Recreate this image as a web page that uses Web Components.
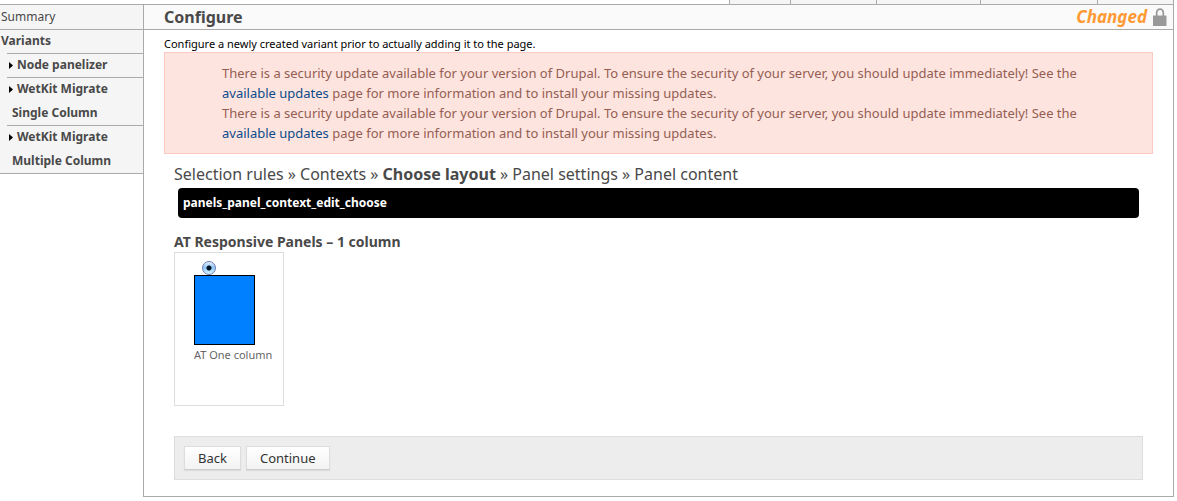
<!DOCTYPE html>
<html lang="en">
<head>
<meta charset="utf-8">
<title>Configure</title>
<style>
  body { margin: 0; background: #fff; color: #494949; font-family: "Noto Sans", "Open Sans", sans-serif; font-size: 12px; }
</style>
</head>
<body>
<page-manager>
  <task-tabs slot="tabs"></task-tabs>
  <task-nav slot="nav">
    <nav-item href="#summary">Summary</nav-item>
    <nav-item href="#variants" section>Variants</nav-item>
    <nav-item href="#node" nested>Node panelizer</nav-item>
    <nav-item href="#single" nested>WetKit Migrate<br>Single Column</nav-item>
    <nav-item href="#multiple" nested>WetKit Migrate<br>Multiple Column</nav-item>
  </task-nav>
  <panel-header slot="header" status="Changed">Configure</panel-header>
  <update-alert></update-alert>
  <wizard-trail></wizard-trail>
  <debug-bar>panels_panel_context_edit_choose</debug-bar>
  <layout-picker heading="AT Responsive Panels – 1 column">AT One column</layout-picker>
  <form-actions></form-actions>
</page-manager>
<script>
const define = (name, render) => customElements.define(name, class extends HTMLElement {
  constructor() { super(); this.attachShadow({ mode: "open" }); }
  connectedCallback() { this.shadowRoot.innerHTML = render(this); }
});

define("page-manager", () => `
<style>
  :host { display: block; padding-right: 3px; }
  .body { display: grid; grid-template-columns: 144px minmax(0, 1fr); }
  main { border: 1px solid #aaa; border-width: 0 1px 1px 0; padding-bottom: 16px; }
  .content { padding: 6px 20px 0; }
  aside { display: flex; flex-direction: column; }
  aside::after { content: ""; flex: 1; border-right: 1px solid #aaa; }
  p { margin: 0; color: #000; font-size: 11px; line-height: 16px; }
</style>
<slot name="tabs"></slot>
<div class="body">
  <aside><slot name="nav"></slot></aside>
  <main>
    <slot name="header"></slot>
    <div class="content">
      <p>Configure a newly created variant prior to actually adding it to the page.</p>
      <slot></slot>
    </div>
  </main>
</div>`);

define("task-tabs", () => `
<style>
  :host { display: flex; justify-content: flex-end; height: 4px; border-bottom: 1px solid #aaa; }
  i { box-sizing: border-box; background: #f5f5f5; border-left: 1px solid #aaa; }
  i:last-child { border-right: 1px solid #aaa; }
</style>
<i style="width:61px"></i><i style="width:86px"></i><i style="width:104px"></i><i style="width:117px"></i><i style="width:77px"></i>`);

define("task-nav", () => `
<style>
  :host { display: block; background: #f5f5f5; border: 1px solid #aaa; border-width: 0 1px 1px 0; }
</style>
<nav><slot></slot></nav>`);

define("nav-item", el => `
<style>
  :host { display: block; }
  a { display: block; padding-left: 1px; color: inherit; text-decoration: none; line-height: 24px; }
  :host([section]) a, :host([nested]) a { box-shadow: inset 0 1px #aaa; font-weight: bold; }
  :host([nested]) a { margin-left: 7px; padding-left: 5px; text-indent: -3px; }
  svg { width: 5px; height: 7px; margin-right: 3px; }
</style>
<a href="${el.getAttribute("href")}">${el.hasAttribute("nested") ? '<svg viewBox="0 0 5 7"><path d="M0 0L4 3.5L0 7Z" fill="#000"/></svg>' : ""}<slot></slot></a>`);

define("panel-header", el => `
<style>
  :host { display: flex; align-items: center; height: 24px; padding: 0 6px 0 20px; gap: 6px; background: #fafafa; border-bottom: 1px solid #aaa; }
  h1 { margin: 0; flex: 1; font-size: 16px; line-height: 24px; }
  em { color: #f93; font-size: 17px; font-weight: bold; line-height: 24px; }
  svg { width: 14px; height: 18px; }
</style>
<h1><slot></slot></h1><em>${el.getAttribute("status")}</em>
<svg viewBox="0 0 14 18" role="img" aria-label="Locked"><path d="M3.7 8V4.5a3.3 3.3 0 0 1 6.6 0V8" fill="none" stroke="#999" stroke-width="1.7"/><rect x="0" y="7.5" width="13.5" height="10.5" fill="#999"/></svg>`);

define("update-alert", () => {
  const item = `<li>There is a security update available for your version of Drupal. To ensure the security of your server, you should update immediately! See the <a href="#updates">available updates</a> page for more information and to install your missing updates.</li>`;
  return `
<style>
  :host { display: block; background: #fee4df; border: 1px solid #fcc9c4; padding: 10px 30px 10px 57px; color: #945e52; font-size: 13px; line-height: 20px; }
  ul { margin: 0; padding: 0; list-style: none; }
  a { color: #0b4b8a; text-decoration: none; }
</style>
<ul>${item}${item}</ul>`;
});

define("wizard-trail", () => `
<style>
  :host { display: block; padding: 8px 10px 2px; font-size: 16px; line-height: 24px; }
</style>
<nav>Selection rules » Contexts » <strong>Choose layout</strong> » Panel settings » Panel content</nav>`);

define("debug-bar", () => `
<style>
  :host { display: block; margin: 0 14px; padding: 0 5px; background: #000; color: #fff; border-radius: 4px; font-size: 12px; font-weight: bold; line-height: 30px; }
</style>
<slot></slot>`);

define("layout-picker", el => `
<style>
  :host { display: block; padding: 14px 10px 0; }
  h2 { margin: 0; font-size: 14px; line-height: 20px; }
  .card { box-sizing: border-box; width: 110px; height: 154px; border: 1px solid #ddd; padding: 8px 0 0 19px; display: flex; flex-direction: column; }
  input { appearance: none; box-sizing: border-box; width: 14px; height: 14px; margin: 0 0 0 8px; border: 1px solid #6b79b4; border-radius: 50%; background: radial-gradient(circle, #012 0 2px, transparent 3px), linear-gradient(#e9f2fb, #8cc4f3 45%, #d8f8ff); }
  label { display: block; color: #666; font-size: 11px; line-height: 20px; white-space: nowrap; }
  .preview { display: block; box-sizing: border-box; width: 61px; height: 70px; background: #0080ff; border: 1px solid #000; }
</style>
<h2>${el.getAttribute("heading")}</h2>
<div class="card">
  <input type="radio" name="layout" id="one" checked>
  <label for="one"><span class="preview"></span><slot></slot></label>
</div>`);

define("form-actions", () => `
<style>
  :host { display: flex; gap: 5px; margin: 30px 10px 0; padding: 9px; background: #ededed; border: 1px solid #ddd; }
  button { box-sizing: border-box; height: 24px; margin: 0; padding: 0 13px; border: 1px solid #ddd; border-bottom-color: #ccc; background: linear-gradient(#fff, #f3f3f3); box-shadow: 0 1px 1px #ddd; color: #333; font: 13px/20px "Noto Sans", "Open Sans", sans-serif; }
</style>
<button type="button">Back</button><button type="button">Continue</button>`);
</script>
</body>
</html>
